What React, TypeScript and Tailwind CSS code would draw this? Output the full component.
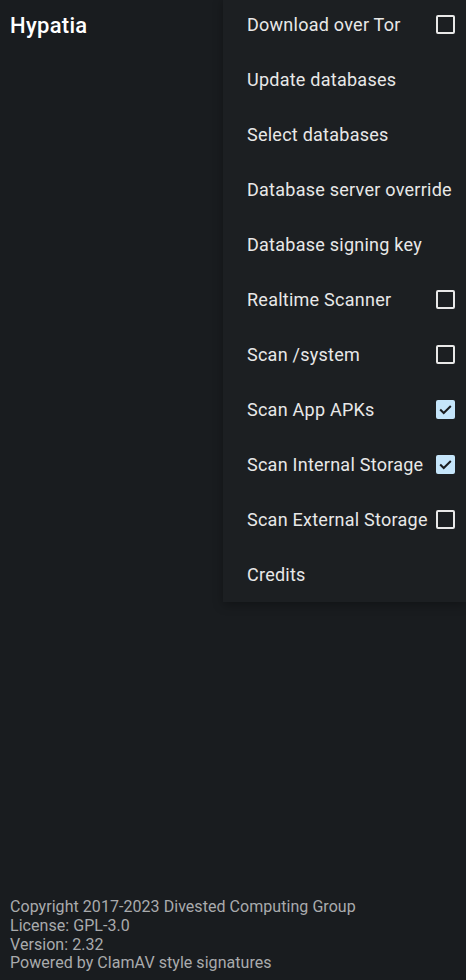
import React from "react";

type Item = { label: string; checked?: boolean };

const items: Item[] = [
  { label: "Download over Tor", checked: false },
  { label: "Update databases" },
  { label: "Select databases" },
  { label: "Database server override" },
  { label: "Database signing key" },
  { label: "Realtime Scanner", checked: false },
  { label: "Scan /system", checked: false },
  { label: "Scan App APKs", checked: true },
  { label: "Scan Internal Storage", checked: true },
  { label: "Scan External Storage", checked: false },
  { label: "Credits" },
];

function Checkbox({ checked }: { checked: boolean }) {
  if (checked) {
    return (
      <div className="w-[19px] h-[19px] rounded-[2px] bg-[#c5e5fa] flex items-center justify-center">
        <svg width="17" height="17" viewBox="0 0 24 24" fill="none">
          <path d="M4.5 12l5 5L19.5 7" stroke="#1a1c1f" strokeWidth="2.8" />
        </svg>
      </div>
    );
  }
  return <div className="w-[19px] h-[19px] rounded-[2px] border-2 border-[#e8e8e8]" />;
}

export default function App() {
  return (
    <div
      className="relative w-[466px] h-[980px] bg-[#191c1f] overflow-hidden flex flex-col"
      style={{ fontFamily: "Roboto, 'Noto Sans', sans-serif" }}
    >
      <div className="h-[50px] px-[10px] flex items-center">
        <h1 className="text-[22px] font-medium tracking-[0.3px] text-white">Hypatia</h1>
      </div>

      <div className="flex-1" />

      <div className="px-[10px] pb-[7px] text-[16px] leading-[18.7px] tracking-[0.05px] text-[#a9abad]">
        <p>Copyright 2017-2023 Divested Computing Group</p>
        <p>License: GPL-3.0</p>
        <p>Version: 2.32</p>
        <p>Powered by ClamAV style signatures</p>
      </div>

      {/* Overflow menu */}
      <div className="absolute top-[-3px] left-[223px] w-[243px] bg-[#1c1f22] shadow-[0_3px_10px_rgba(0,0,0,0.3)]">
        {items.map((item) => (
          <div key={item.label} className="h-[55px] pl-[24px] pr-[11px] flex items-center justify-between">
            <span className="text-[18px] tracking-[0.25px] text-[#e8e8e8] whitespace-nowrap">{item.label}</span>
            {item.checked !== undefined && <Checkbox checked={item.checked} />}
          </div>
        ))}
      </div>
    </div>
  );
}
